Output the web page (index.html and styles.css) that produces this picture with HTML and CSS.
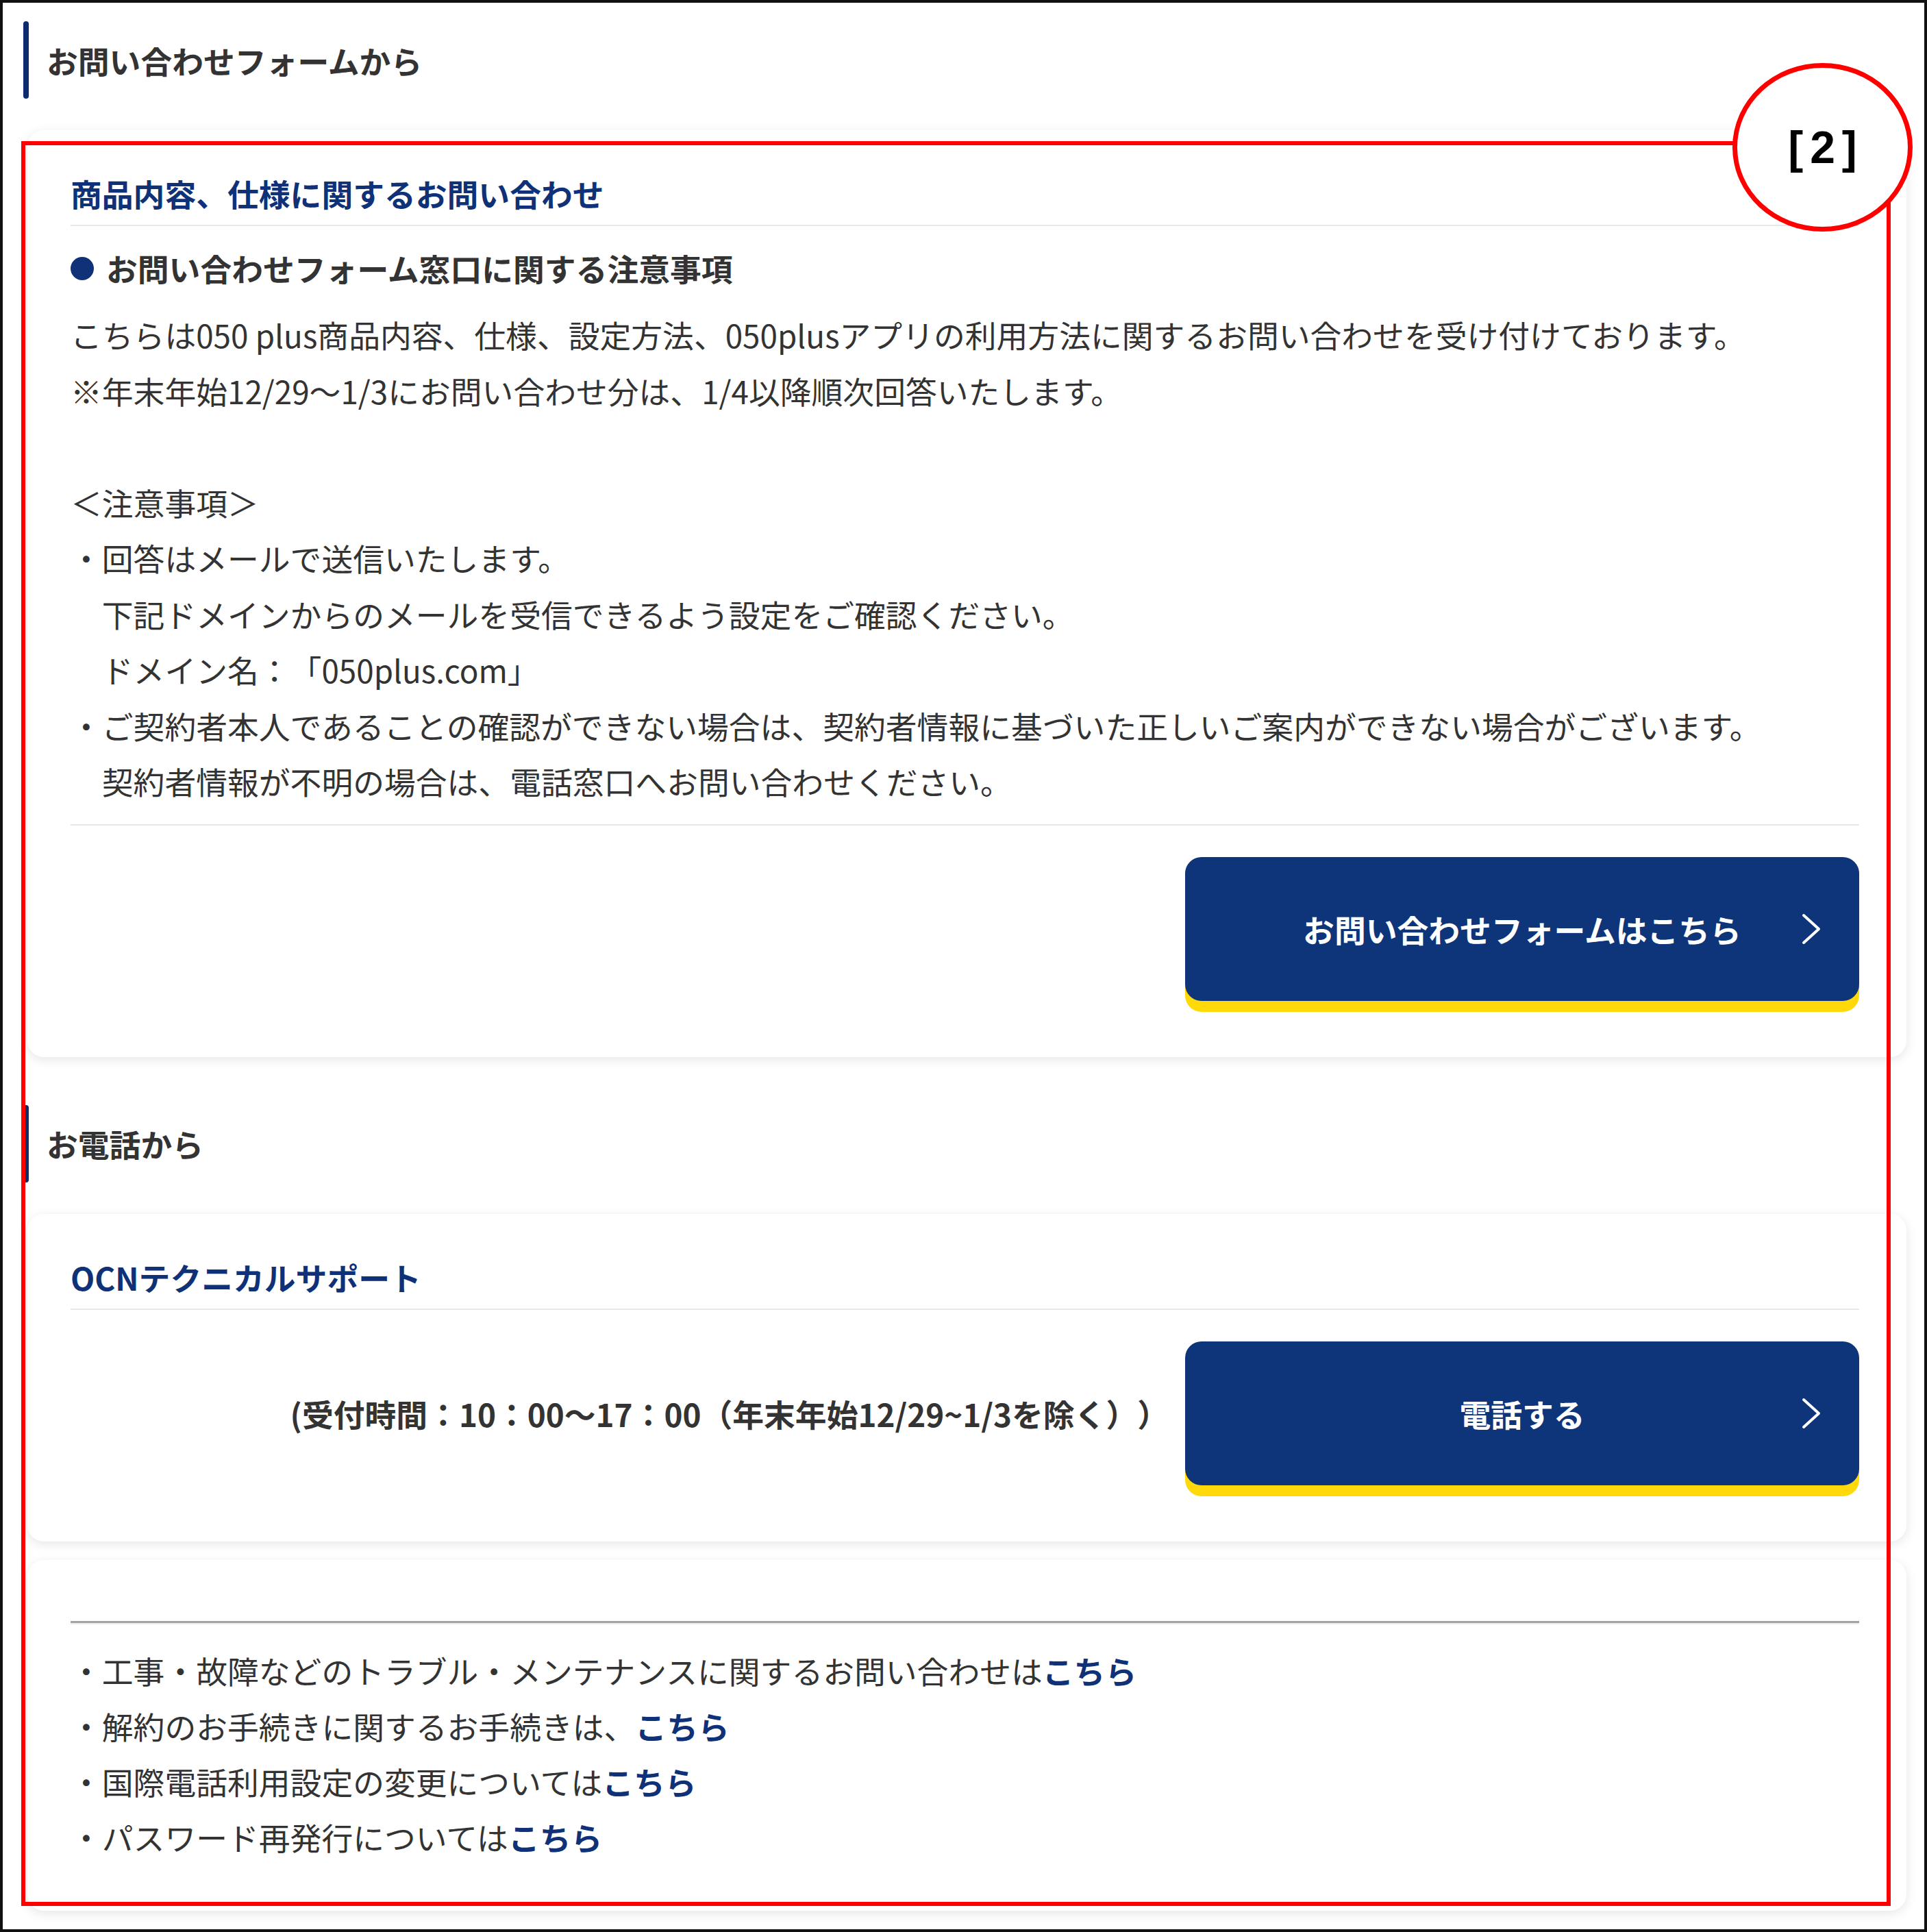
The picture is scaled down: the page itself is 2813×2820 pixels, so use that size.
FILE: index.html
```html
<!DOCTYPE html>
<html lang="ja">
<head>
  <meta charset="UTF-8" />
  <meta name="viewport" content="width=device-width,initial-scale=1" />
  <title>お問い合わせ – 050 plus</title>
  <link rel="stylesheet" href="styles.css">
</head>
<body>
  <div class="frame">
    <h2 class="section-title">お問い合わせフォームから</h2>

    <section class="card">
      <h3 class="card-title">商品内容、仕様に関するお問い合わせ</h3>
      <h4 class="notice-title">お問い合わせフォーム窓口に関する注意事項</h4>
      <div class="notice-body">
        <p>こちらは050 plus商品内容、仕様、設定方法、050plusアプリの利用方法に関するお問い合わせを受け付けております。</p>
        <p>※年末年始12/29～1/3にお問い合わせ分は、1/4以降順次回答いたします。</p>
        <p class="after-blank">＜注意事項＞</p>
        <ul class="dot-list">
          <li>回答はメールで送信いたします。<br>下記ドメインからのメールを受信できるよう設定をご確認ください。<br>ドメイン名：「050plus.com」</li>
          <li>ご契約者本人であることの確認ができない場合は、契約者情報に基づいた正しいご案内ができない場合がございます。<br>契約者情報が不明の場合は、電話窓口へお問い合わせください。</li>
        </ul>
      </div>
      <div class="action-row">
        <a class="btn" href="#">
          <span></span>
          <span class="btn-label">お問い合わせフォームはこちら</span>
          <svg class="btn-arrow" viewBox="0 0 30 46"><polyline points="4,3 26,23 4,43" /></svg>
        </a>
      </div>
    </section>

    <h2 class="section-title section-title-next">お電話から</h2>

    <section class="card">
      <h3 class="card-title">OCNテクニカルサポート</h3>
      <div class="action-row">
        <p class="tel-hours">(受付時間：10：00～17：00（年末年始12/29~1/3を除く））</p>
        <a class="btn" href="#">
          <span></span>
          <span class="btn-label">電話する</span>
          <svg class="btn-arrow" viewBox="0 0 30 46"><polyline points="4,3 26,23 4,43" /></svg>
        </a>
      </div>
    </section>

    <section class="card card-links">
      <hr class="rule">
      <ul class="dot-list link-list">
        <li>工事・故障などのトラブル・メンテナンスに関するお問い合わせは<a href="#">こちら</a></li>
        <li>解約のお手続きに関するお手続きは、<a href="#">こちら</a></li>
        <li>国際電話利用設定の変更については<a href="#">こちら</a></li>
        <li>パスワード再発行については<a href="#">こちら</a></li>
      </ul>
    </section>

    <!-- annotation overlay -->
    <div class="annot-box"></div>
    <div class="annot-badge">[2]</div>
  </div>
</body>
</html>
```

FILE: styles.css
```css
body {
  margin: 0;
  background: #fff;
  font-family: "Noto Sans CJK JP", "Noto Sans", sans-serif;
  color: #333;
  text-spacing-trim: space-all;
}
.frame {
  position: relative;
  box-sizing: border-box;
  width: 2813px;
  height: 2820px;
  border: 4px solid #111;
  padding: 27px 26px 0 36px;
  overflow: hidden;
}

/* section headings with the navy bar */
.section-title {
  display: flex;
  align-items: center;
  gap: 26px;
  height: 113px;
  margin: 0 0 46px -6px;
  font-size: 45.8px;
  font-weight: 700;
  color: #333;
}
.section-title::before {
  content: "";
  align-self: stretch;
  width: 8px;
  border-radius: 4px;
  background: #0c2c6e;
}
.section-title-next {
  margin-top: 70px;
}

/* cards */
.card {
  background: #fff;
  border-radius: 24px;
  box-shadow: 0 4px 16px rgba(0,0,0,0.1);
  padding: 58px 69px 82px 63px;
  margin-bottom: 27px;
}
.card-title {
  margin: 0;
  padding-bottom: 12px;
  border-bottom: 2px solid #e8e8e8;
  font-size: 45.8px;
  line-height: 68px;
  font-weight: 700;
  color: #0e3178;
}
.notice-title {
  display: flex;
  align-items: center;
  gap: 18px;
  margin: 21px 0 0;
  font-size: 45.8px;
  line-height: 81px;
  font-weight: 700;
  color: #333;
}
.notice-title::before {
  content: "";
  width: 34px;
  height: 34px;
  border-radius: 50%;
  background: #0e3178;
}
.notice-body {
  margin-top: 16px;
  padding-bottom: 21px;
  border-bottom: 2px solid #e8e8e8;
  font-size: 45.8px;
  line-height: 81.5px;
}
.notice-body p {
  margin: 0;
}
.notice-body .after-blank {
  margin-top: 81.5px;
}
.dot-list {
  list-style: none;
  margin: 0;
  padding: 0 0 0 1em;
}
.dot-list li {
  text-indent: -1em;
}
.dot-list li::before {
  content: "・";
}

/* button rows */
.action-row {
  display: flex;
  justify-content: flex-end;
  align-items: center;
  gap: 24px;
  margin-top: 46px;
}
.btn {
  display: grid;
  grid-template-columns: 1fr auto 1fr;
  align-items: center;
  width: 984px;
  height: 210px;
  border-radius: 24px;
  background: #0e357a;
  box-shadow: 0 16px 0 0 #ffd90a;
  color: #fff;
  text-decoration: none;
  font-size: 45.8px;
  font-weight: 700;
}
.btn-arrow {
  justify-self: end;
  width: 30px;
  height: 46px;
  margin-right: 55px;
  fill: none;
  stroke: #fff;
  stroke-width: 4;
  stroke-linecap: round;
  stroke-linejoin: round;
}
.tel-hours {
  margin: 0;
  font-size: 45.8px;
  font-weight: 700;
  color: #333;
}

/* bottom links */
.card-links {
  padding-top: 89px;
  padding-bottom: 67px;
}
.rule {
  height: 0;
  margin: 0 0 27px;
  border: 0;
  border-top: 3px solid #a3a3a3;
  border-bottom: 2px solid #eeeeee;
}
.link-list {
  font-size: 45.8px;
  line-height: 81px;
}
.link-list a {
  color: #0e3178;
  font-weight: 700;
  text-decoration: none;
}

/* red annotation */
.annot-box {
  position: absolute;
  left: 27px;
  top: 202px;
  width: 2729px;
  height: 2576px;
  box-sizing: border-box;
  border: 6px solid #ff0000;
}
.annot-badge {
  position: absolute;
  left: 2525px;
  top: 88px;
  width: 263px;
  height: 246px;
  box-sizing: border-box;
  border: 7px solid #ff0000;
  border-radius: 50%;
  background: #fff;
  display: flex;
  align-items: center;
  justify-content: center;
  padding-left: 10px;
  font-family: "Liberation Sans", Arial, sans-serif;
  font-size: 66px;
  font-weight: 700;
  letter-spacing: 10px;
  color: #000;
}
```
